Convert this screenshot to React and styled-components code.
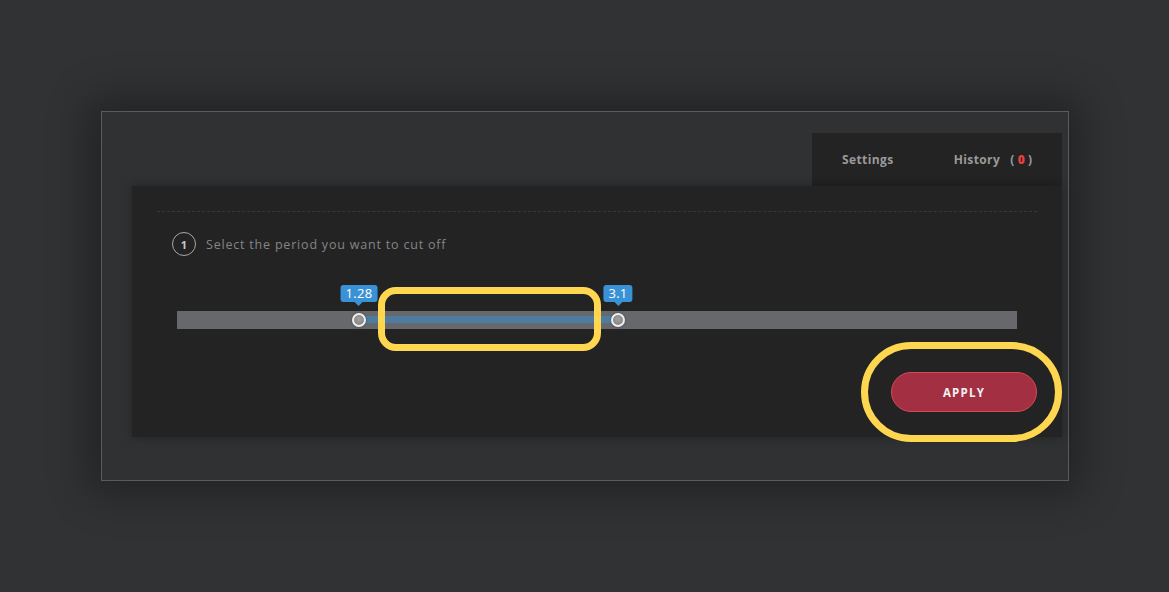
import React from 'react';
import styled, { createGlobalStyle } from 'styled-components';

const GlobalStyle = createGlobalStyle`
  html, body {
    margin: 0;
    padding: 0;
    background: #313234;
    font-family: "Open Sans", "Liberation Sans", sans-serif;
  }
`;

const Page = styled.div`
  width: 1169px;
  height: 592px;
  padding: 111px 0 0 101px;
  box-sizing: border-box;
`;

const Frame = styled.div`
  width: 968px;
  height: 370px;
  box-sizing: border-box;
  border: 1px solid #5b5b5d;
  background: #303133;
  box-shadow: 0 0 40px 12px rgba(0, 0, 0, 0.32);
  padding: 21px 6px 0 30px;
  display: flex;
  flex-direction: column;
  align-items: flex-end;
`;

const Tabs = styled.div`
  width: 250px;
  height: 53px;
  background: #232323;
  display: flex;
  align-items: center;
  padding-left: 30px;
  box-sizing: border-box;
  gap: 60px;
`;

const Tab = styled.div`
  font-size: 12px;
  font-weight: 700;
  letter-spacing: 0.4px;
  color: #9a9a9a;
  display: flex;
  align-items: center;
  gap: 10px;
`;

const Count = styled.span`
  color: #9a9a9a;
  b {
    color: #e8413f;
    margin: 0 3px;
  }
`;

const Panel = styled.div`
  position: relative;
  width: 930px;
  height: 251px;
  box-sizing: border-box;
  background: #232323;
  box-shadow: 0 0 10px rgba(0, 0, 0, 0.3);
  padding: 25px 25px;
  display: flex;
  flex-direction: column;
`;

const Divider = styled.div`
  border-top: 1px dashed #383838;
`;

const Step = styled.div`
  margin-top: 20px;
  display: flex;
  align-items: center;
  gap: 10px;
  padding-left: 15px;
`;

const StepNum = styled.div`
  width: 24px;
  height: 24px;
  box-sizing: border-box;
  border: 1.5px solid #a8a8a8;
  border-radius: 50%;
  display: flex;
  align-items: center;
  justify-content: center;
  font-size: 11px;
  font-weight: 700;
  color: #c8c8c8;
`;

const StepText = styled.div`
  font-size: 12.5px;
  letter-spacing: 0.8px;
  color: #858585;
  padding-top: 1px;
`;

const SliderWrap = styled.div`
  margin-top: 55px;
  padding: 0 20px;
`;

const Track = styled.div`
  position: relative;
  height: 18px;
  background: #67686b;
`;

const Fill = styled.div`
  position: absolute;
  top: 5px;
  height: 7px;
  background: #4e7ca1;
`;

const Handle = styled.div`
  position: absolute;
  top: 2px;
  width: 14px;
  height: 14px;
  margin-left: -7px;
  box-sizing: border-box;
  border-radius: 50%;
  border: 2px solid #eeeeee;
  background: radial-gradient(circle at 50% 40%, #a2a2a2, #7c7c7c);
  box-shadow: 0 0 2px rgba(0, 0, 0, 0.5);
`;

const Bubble = styled.div`
  position: absolute;
  bottom: 27px;
  transform: translateX(-50%);
  padding: 0 5px;
  height: 17px;
  line-height: 17px;
  border-radius: 3px;
  background: #3a92d6;
  color: #ffffff;
  font-size: 13px;
  letter-spacing: 0.3px;
  &::after {
    content: '';
    position: absolute;
    left: 50%;
    bottom: -4px;
    margin-left: -4px;
    border-left: 4px solid transparent;
    border-right: 4px solid transparent;
    border-top: 4px solid #3a92d6;
  }
`;

const Footer = styled.div`
  margin-top: auto;
  display: flex;
  justify-content: flex-end;
`;

const ApplyButton = styled.button`
  width: 146px;
  height: 40px;
  border-radius: 20px;
  border: 1px solid #d9475a;
  background: #a33042;
  color: #f2f2f2;
  font-family: "Open Sans", "Liberation Sans", sans-serif;
  font-size: 11.5px;
  font-weight: 700;
  letter-spacing: 1.2px;
  cursor: pointer;
`;

const Highlight = styled.div`
  position: absolute;
  box-sizing: border-box;
  border: 7px solid #ffd64f;
  border-radius: ${p => p.$radius}px;
  pointer-events: none;
`;

const low = 1.28;
const high = 3.1;
const lowPct = 21.67;
const highPct = 52.5;

export default function App() {
  return (
    <>
      <GlobalStyle />
      <Page>
        <Frame>
          <Tabs>
            <Tab>Settings</Tab>
            <Tab>
              History
              <Count>(<b>0</b>)</Count>
            </Tab>
          </Tabs>
          <Panel>
            <Divider />
            <Step>
              <StepNum>1</StepNum>
              <StepText>Select the period you want to cut off</StepText>
            </Step>
            <SliderWrap>
              <Track>
                <Fill style={{ left: `${lowPct}%`, width: `${highPct - lowPct}%` }} />
                <Bubble style={{ left: `${lowPct}%` }}>{low}</Bubble>
                <Bubble style={{ left: `${highPct}%` }}>{high}</Bubble>
                <Handle style={{ left: `${lowPct}%` }} />
                <Handle style={{ left: `${highPct}%` }} />
              </Track>
            </SliderWrap>
            <Footer>
              <ApplyButton>APPLY</ApplyButton>
            </Footer>
            <Highlight $radius={18} style={{ left: 246, top: 101, width: 223, height: 64 }} />
            <Highlight $radius={50} style={{ left: 729, top: 156, width: 201, height: 100 }} />
          </Panel>
        </Frame>
      </Page>
    </>
  );
}
